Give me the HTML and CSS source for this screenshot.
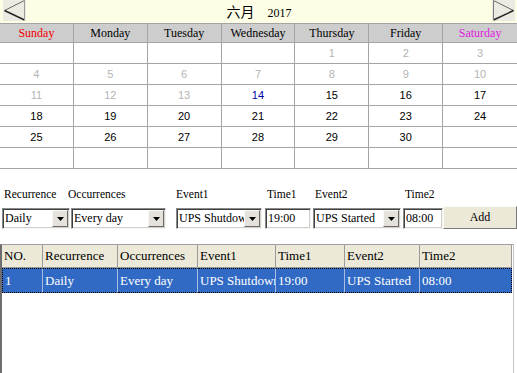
FILE: index.html
```html
<!DOCTYPE html>
<html>
<head>
<meta charset="utf-8">
<title>Schedule</title>
<link rel="stylesheet" href="styles.css">
</head>
<body>
<div class="cal">
  <div class="cal-head">
    <div class="nav prev">
      <svg width="23" height="21" viewBox="0 0 23 21">
        <line x1="21.5" y1="0.5" x2="1.5" y2="10.5" stroke="#6a6a6a" stroke-width="1"/>
        <line x1="1.5" y1="10.5" x2="21.5" y2="20" stroke="#222" stroke-width="1.4"/>
        <line x1="21.5" y1="0.5" x2="21.5" y2="20" stroke="#9a9a9a" stroke-width="1"/>
      </svg>
    </div>
    <div class="title"><span class="month">六月</span><span class="year">2017</span></div>
    <div class="nav next">
      <svg width="23" height="21" viewBox="0 0 23 21">
        <line x1="1.5" y1="0.5" x2="21.5" y2="10.5" stroke="#6a6a6a" stroke-width="1"/>
        <line x1="21.5" y1="10.5" x2="1.5" y2="20" stroke="#222" stroke-width="1.4"/>
        <line x1="1.5" y1="0.5" x2="1.5" y2="20" stroke="#7a7a7a" stroke-width="1"/>
      </svg>
    </div>
  </div>
  <div class="grid">
    <div class="dh sun">Sunday</div>
    <div class="dh">Monday</div>
    <div class="dh">Tuesday</div>
    <div class="dh">Wednesday</div>
    <div class="dh">Thursday</div>
    <div class="dh">Friday</div>
    <div class="dh sat">Saturday</div>

    <div class="d"></div><div class="d"></div><div class="d"></div><div class="d"></div>
    <div class="d off">1</div><div class="d off">2</div><div class="d off">3</div>

    <div class="d off">4</div><div class="d off">5</div><div class="d off">6</div><div class="d off">7</div>
    <div class="d off">8</div><div class="d off">9</div><div class="d off">10</div>

    <div class="d off">11</div><div class="d off">12</div><div class="d off">13</div><div class="d today">14</div>
    <div class="d">15</div><div class="d">16</div><div class="d">17</div>

    <div class="d">18</div><div class="d">19</div><div class="d">20</div><div class="d">21</div>
    <div class="d">22</div><div class="d">23</div><div class="d">24</div>

    <div class="d">25</div><div class="d">26</div><div class="d">27</div><div class="d">28</div>
    <div class="d">29</div><div class="d">30</div><div class="d"></div>

    <div class="d"></div><div class="d"></div><div class="d"></div><div class="d"></div>
    <div class="d"></div><div class="d"></div><div class="d"></div>
  </div>
</div>

<div class="form">
  <div class="field f-rec">
    <span class="lbl">Recurrence</span>
    <div class="combo"><span class="val">Daily</span><span class="btn"><svg width="7" height="4" viewBox="0 0 7 4"><polygon points="0,0 7,0 3.5,4" fill="#000"/></svg></span></div>
  </div>
  <div class="field f-occ">
    <span class="lbl">Occurrences</span>
    <div class="combo"><span class="val">Every day</span><span class="btn"><svg width="7" height="4" viewBox="0 0 7 4"><polygon points="0,0 7,0 3.5,4" fill="#000"/></svg></span></div>
  </div>
  <div class="field f-ev1">
    <span class="lbl">Event1</span>
    <div class="combo"><span class="val">UPS Shutdown</span><span class="btn"><svg width="7" height="4" viewBox="0 0 7 4"><polygon points="0,0 7,0 3.5,4" fill="#000"/></svg></span></div>
  </div>
  <div class="field f-t1">
    <span class="lbl">Time1</span>
    <div class="text">19:00</div>
  </div>
  <div class="field f-ev2">
    <span class="lbl">Event2</span>
    <div class="combo"><span class="val">UPS Started</span><span class="btn"><svg width="7" height="4" viewBox="0 0 7 4"><polygon points="0,0 7,0 3.5,4" fill="#000"/></svg></span></div>
  </div>
  <div class="field f-t2">
    <span class="lbl">Time2</span>
    <div class="text">08:00</div>
  </div>
  <div class="add">Add</div>
</div>

<div class="list">
  <table>
    <colgroup>
      <col class="c-no"><col class="c-rec"><col class="c-occ"><col class="c-ev1"><col class="c-t1"><col class="c-ev2"><col class="c-t2">
    </colgroup>
    <thead>
      <tr><th>NO.</th><th>Recurrence</th><th>Occurrences</th><th>Event1</th><th>Time1</th><th>Event2</th><th>Time2</th></tr>
    </thead>
    <tbody>
      <tr class="sel"><td>1</td><td>Daily</td><td>Every day</td><td>UPS Shutdown</td><td>19:00</td><td>UPS Started</td><td>08:00</td></tr>
    </tbody>
  </table>
</div>
</body>
</html>
```

FILE: styles.css
```css
* { box-sizing: border-box; }
html, body { margin: 0; padding: 0; }
body {
  width: 517px;
  height: 373px;
  overflow: hidden;
  background: #fff;
  color: #000;
  font-family: "Liberation Serif", "Times New Roman", serif;
}

/* calendar header */
.cal-head {
  height: 23px;
  background: #fefee6;
  display: flex;
  align-items: flex-start;
  justify-content: space-between;
}
.nav {
  width: 23px;
  height: 21px;
  background: #ecebe2;
}
.nav svg { display: block; }
.nav.prev { margin-left: 3px; }
.nav.next { margin-right: 2px; }
.title {
  display: flex;
  align-items: baseline;
  padding-top: 2px;
}
.month {
  font-family: "Noto Sans CJK SC", "Noto Sans CJK JP", sans-serif;
  font-size: 14px;
  line-height: 18px;
}
.year {
  font-size: 12px;
  margin-left: 13px;
}

/* calendar grid */
.grid {
  display: grid;
  grid-template-columns: repeat(7, 1fr);
  border-top: 1px solid #a4a4a4;
}
.dh {
  height: 19px;
  background: #cdcdcd;
  border-right: 1px solid #a4a4a4;
  border-bottom: 1px solid #a4a4a4;
  font-size: 12px;
  line-height: 18px;
  text-align: center;
}
.dh.sun { color: #f00000; }
.dh.sat { color: #e020e0; }
.d {
  height: 21px;
  border-right: 1px solid #a4a4a4;
  border-bottom: 1px solid #a4a4a4;
  font-family: "Liberation Sans", Arial, sans-serif;
  font-size: 11px;
  line-height: 20px;
  text-align: center;
}
.grid > :nth-child(7n) { border-right: none; }
.d.off { color: #b4b4b4; }
.d.today { color: #0000a8; }

/* form */
.form {
  display: flex;
  align-items: flex-end;
  margin-top: 18px;
}
.field {
  display: flex;
  flex-direction: column;
}
.lbl {
  font-size: 11.5px;
  line-height: 14px;
  margin-bottom: 7px;
  padding-left: 2px;
  white-space: nowrap;
}
.f-rec { margin-left: 2px; width: 68px; }
.f-occ { margin-left: 1px; width: 95px; }
.f-occ .lbl { margin-left: -5px; }
.f-ev1 { margin-left: 10px; width: 86px; }
.f-ev1 .lbl { padding-left: 0; }
.f-t1 { margin-left: 3px; width: 46px; }
.f-ev2 { margin-left: 2px; width: 88px; }
.f-t2 { margin-left: 2px; width: 40px; }

.combo, .text {
  height: 21px;
  display: flex;
  align-items: stretch;
  background: #fff;
  border: 1px solid;
  border-color: #8a8a8a #f4f4f4 #f4f4f4 #8a8a8a;
  box-shadow: inset 1px 1px 0 #404040, inset -1px -1px 0 #d4d0c8;
  font-size: 12px;
  line-height: 19px;
  overflow: hidden;
  white-space: nowrap;
}
.combo .val {
  flex: 1;
  padding-left: 2px;
  overflow: hidden;
}
.text { padding-left: 2px; }
.combo .btn {
  width: 16px;
  margin: 1px 1px 1px 0;
  background: #e4e2da;
  border: 1px solid;
  border-color: #f8f8f8 #6a6a6a #6a6a6a #f8f8f8;
  display: flex;
  align-items: center;
  justify-content: center;
}
.combo .btn svg { display: block; }

.add {
  width: 74px;
  height: 23px;
  margin-bottom: 0;
  background: #ece9d8;
  border: 1px solid;
  border-color: #fbfbf8 #7a7a7a #7a7a7a #fbfbf8;
  font-size: 12px;
  line-height: 21px;
  text-align: center;
}

/* list */
.list {
  width: 514px;
  height: 140px;
  margin-top: 15px;
  border-top: 1px solid #a0a0a0;
  border-left: 2px solid #6e6e6e;
  border-right: 1px solid #c4c4c4;
  background: #fff;
}
.list table {
  border-collapse: separate;
  border-spacing: 0;
  table-layout: fixed;
  width: 510px;
  font-size: 13px;
}
.c-no { width: 41px; }
.c-rec { width: 75px; }
.c-occ { width: 80px; }
.c-ev1 { width: 78px; }
.c-t1 { width: 69px; }
.c-ev2 { width: 75px; }
.c-t2 { width: 92px; }
.list th {
  height: 23px;
  padding: 0 2px;
  background: #ece9d8;
  border-right: 1px solid #9a9a9a;
  border-bottom: 1px solid #9a9a9a;
  font-weight: normal;
  text-align: left;
  white-space: nowrap;
  overflow: hidden;
}
.list td {
  height: 25px;
  padding: 0 2px;
  white-space: nowrap;
  overflow: hidden;
}
.sel td {
  background: #316ac5;
  color: #fff;
  border-top: 1px dotted #000;
  border-bottom: 1px dotted #000;
  border-right: 1px solid #a9bde2;
}
.sel td:first-child { border-left: 1px dotted #000; }
.sel td:last-child { border-right: 1px dotted #000; }
```
